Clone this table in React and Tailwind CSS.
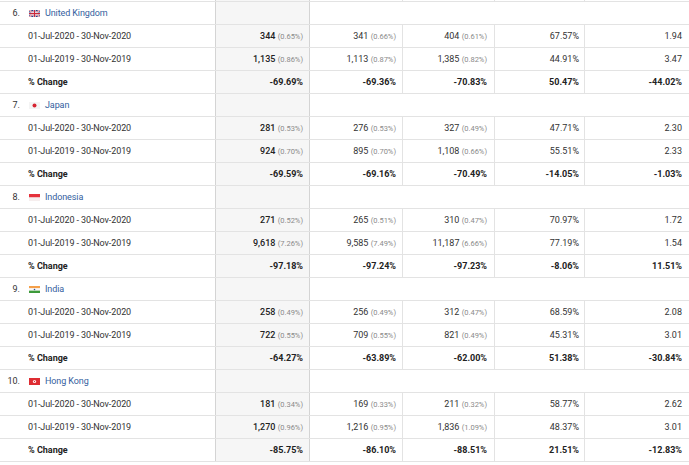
const groups = [
  {
    rank: "6.",
    name: "United Kingdom",
    flag: "uk",
    rows: [
      ["344", "0.65%", "341", "0.66%", "404", "0.61%", "67.57%", "1.94"],
      ["1,135", "0.86%", "1,113", "0.87%", "1,385", "0.82%", "44.91%", "3.47"],
    ],
    change: ["-69.69%", "-69.36%", "-70.83%", "50.47%", "-44.02%"],
  },
  {
    rank: "7.",
    name: "Japan",
    flag: "jp",
    rows: [
      ["281", "0.53%", "276", "0.53%", "327", "0.49%", "47.71%", "2.30"],
      ["924", "0.70%", "895", "0.70%", "1,108", "0.66%", "55.51%", "2.33"],
    ],
    change: ["-69.59%", "-69.16%", "-70.49%", "-14.05%", "-1.03%"],
  },
  {
    rank: "8.",
    name: "Indonesia",
    flag: "id",
    rows: [
      ["271", "0.52%", "265", "0.51%", "310", "0.47%", "70.97%", "1.72"],
      ["9,618", "7.26%", "9,585", "7.49%", "11,187", "6.66%", "77.19%", "1.54"],
    ],
    change: ["-97.18%", "-97.24%", "-97.23%", "-8.06%", "11.51%"],
  },
  {
    rank: "9.",
    name: "India",
    flag: "in",
    rows: [
      ["258", "0.49%", "256", "0.49%", "312", "0.47%", "68.59%", "2.08"],
      ["722", "0.55%", "709", "0.55%", "821", "0.49%", "45.31%", "3.01"],
    ],
    change: ["-64.27%", "-63.89%", "-62.00%", "51.38%", "-30.84%"],
  },
  {
    rank: "10.",
    name: "Hong Kong",
    flag: "hk",
    rows: [
      ["181", "0.34%", "169", "0.33%", "211", "0.32%", "58.77%", "2.62"],
      ["1,270", "0.96%", "1,216", "0.95%", "1,836", "1.09%", "48.37%", "3.01"],
    ],
    change: ["-85.75%", "-86.10%", "-88.51%", "21.51%", "-12.83%"],
  },
];

const dates = ["01-Jul-2020 - 30-Nov-2020", "01-Jul-2019 - 30-Nov-2019"];

const Flag = ({ code }) => {
  if (code === "uk")
    return (
      <svg width="11" height="7" viewBox="0 0 22 14">
        <rect width="22" height="14" fill="#2b3f86" />
        <path d="M0 0L22 14M22 0L0 14" stroke="#fff" strokeWidth="3" />
        <path d="M0 0L22 14M22 0L0 14" stroke="#c8283c" strokeWidth="1.2" />
        <path d="M11 0V14M0 7H22" stroke="#fff" strokeWidth="4.5" />
        <path d="M11 0V14M0 7H22" stroke="#c8283c" strokeWidth="2.5" />
      </svg>
    );
  if (code === "jp")
    return (
      <svg width="11" height="7" viewBox="0 0 22 14">
        <rect width="22" height="14" fill="#f4f4f4" />
        <circle cx="11" cy="7" r="4" fill="#d62431" />
      </svg>
    );
  if (code === "id")
    return (
      <svg width="11" height="7" viewBox="0 0 22 14">
        <rect width="22" height="7" fill="#e5313b" />
        <rect y="7" width="22" height="7" fill="#f6eeee" />
      </svg>
    );
  if (code === "in")
    return (
      <svg width="11" height="7" viewBox="0 0 22 14">
        <rect width="22" height="4.7" fill="#f5a04a" />
        <rect y="4.7" width="22" height="4.6" fill="#f8f8f8" />
        <rect y="9.3" width="22" height="4.7" fill="#3d9a3a" />
        <circle cx="11" cy="7" r="1.6" fill="#34529a" />
      </svg>
    );
  return (
    <svg width="11" height="7" viewBox="0 0 22 14">
      <rect width="22" height="14" fill="#de2d33" />
      <circle cx="11" cy="7" r="3.2" fill="#fff" />
      <circle cx="11" cy="7" r="1.3" fill="#de2d33" />
    </svg>
  );
};

const Val = ({ n, p, strong }) => (
  <span>
    <span className={strong ? "font-medium text-[#222]" : "text-[#333]"}>{n}</span>{" "}
    <span className="text-[7.5px] text-[#8a8a8a]">({p})</span>
  </span>
);

const Row = ({ label, cells, bold }) => (
  <div className="flex h-[23px] border-b border-[#e3e3e3]">
    <div className={`w-[216px] shrink-0 flex items-center pl-[28px] border-r border-[#d4d4d4] ${bold ? "font-bold text-[#222]" : "text-[#333] tracking-[-0.1px]"}`}>
      {label}
    </div>
    <div className="w-[94px] shrink-0 flex items-center justify-end pr-[6px] bg-[#f6f6f6] border-r border-[#d4d4d4]">
      {cells[0]}
    </div>
    <div className="w-[93px] shrink-0 flex items-center justify-end pr-[6px] border-r border-[#e3e3e3]">
      {cells[1]}
    </div>
    <div className="w-[92px] shrink-0 flex items-center justify-end pr-[7px] border-r border-[#e3e3e3]">
      {cells[2]}
    </div>
    <div className="w-[90px] shrink-0 flex items-center justify-end pr-[5px] border-r border-[#e3e3e3]">
      {cells[3]}
    </div>
    <div className="flex-1 flex items-center justify-end pr-[7px]">{cells[4]}</div>
  </div>
);

export default function App() {
  return (
    <div className="w-[689px] h-[465px] overflow-hidden bg-white text-[9px] leading-none font-['Roboto','Liberation_Sans',sans-serif]">
      {/* tail of the previous row */}
      <div className="flex h-[2px] border-b border-[#e3e3e3]">
        <div className="w-[216px] shrink-0 border-r border-[#d4d4d4]" />
        <div className="w-[94px] shrink-0 bg-[#f6f6f6] border-r border-[#d4d4d4]" />
        <div className="w-[93px] shrink-0 border-r border-[#e3e3e3]" />
        <div className="w-[92px] shrink-0 border-r border-[#e3e3e3]" />
        <div className="w-[90px] shrink-0 border-r border-[#e3e3e3]" />
        <div className="flex-1" />
      </div>

      {groups.map((g) => (
        <div key={g.rank}>
          {/* Country row */}
          <div className="flex h-[23px] border-b border-[#e3e3e3]">
            <div className="w-[216px] shrink-0 flex items-center border-r border-[#d4d4d4]">
              <span className="w-[20px] text-right text-[#333]">{g.rank}</span>
              <span className="ml-[9px] flex items-center">
                <Flag code={g.flag} />
              </span>
              <span className="ml-[5px] text-[#34609e] tracking-[-0.1px]">{g.name}</span>
            </div>
            <div className="w-[94px] shrink-0 bg-[#f6f6f6] border-r border-[#d4d4d4]" />
            <div className="flex-1" />
          </div>

          {g.rows.map((r, i) => (
            <Row
              key={i}
              label={dates[i]}
              cells={[
                <Val n={r[0]} p={r[1]} strong />,
                <Val n={r[2]} p={r[3]} />,
                <Val n={r[4]} p={r[5]} />,
                <span className="text-[#333]">{r[6]}</span>,
                <span className="text-[#333]">{r[7]}</span>,
              ]}
            />
          ))}

          <Row
            label="% Change"
            bold
            cells={g.change.map((c) => (
              <span className="font-bold text-[#222]">{c}</span>
            ))}
          />
        </div>
      ))}
    </div>
  );
}
